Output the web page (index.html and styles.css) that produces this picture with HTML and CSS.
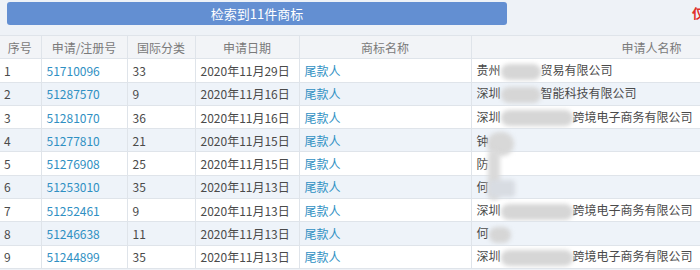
FILE: index.html
```html
<!DOCTYPE html>
<html lang="zh-CN">
<head>
<meta charset="utf-8">
<title>商标查询结果</title>
<link rel="stylesheet" href="styles.css">
</head>
<body>
<div class="page">
  <div class="topbar">
    <div class="result-btn">检索到11件商标</div>
    <div class="note">仅</div>
  </div>
  <div class="table-wrap">
    <table class="grid">
      <colgroup>
        <col class="c-no"><col class="c-reg"><col class="c-cls"><col class="c-date"><col class="c-name"><col class="c-app">
      </colgroup>
      <thead>
        <tr><th>序号</th><th>申请/注册号</th><th>国际分类</th><th>申请日期</th><th>商标名称</th><th>申请人名称</th></tr>
      </thead>
      <tbody>
        <tr><td>1</td><td class="link">51710096</td><td>33</td><td>2020年11月29日</td><td class="link">尾款人</td><td>贵州<span class="blur w40"></span>贸易有限公司</td></tr>
        <tr class="alt"><td>2</td><td class="link">51287570</td><td>9</td><td>2020年11月16日</td><td class="link">尾款人</td><td>深圳<span class="blur w40"></span>智能科技有限公司</td></tr>
        <tr><td>3</td><td class="link">51281070</td><td>36</td><td>2020年11月16日</td><td class="link">尾款人</td><td>深圳<span class="blur w72"></span>跨境电子商务有限公司</td></tr>
        <tr class="alt"><td>4</td><td class="link">51277810</td><td>21</td><td>2020年11月15日</td><td class="link">尾款人</td><td>钟</td></tr>
        <tr><td>5</td><td class="link">51276908</td><td>25</td><td>2020年11月15日</td><td class="link">尾款人</td><td>防</td></tr>
        <tr class="alt"><td>6</td><td class="link">51253010</td><td>35</td><td>2020年11月13日</td><td class="link">尾款人</td><td>何</td></tr>
        <tr><td>7</td><td class="link">51252461</td><td>9</td><td>2020年11月13日</td><td class="link">尾款人</td><td>深圳<span class="blur w72"></span>跨境电子商务有限公司</td></tr>
        <tr class="alt"><td>8</td><td class="link">51246638</td><td>11</td><td>2020年11月13日</td><td class="link">尾款人</td><td>何<span class="blur w22"></span></td></tr>
        <tr><td>9</td><td class="link">51244899</td><td>35</td><td>2020年11月13日</td><td class="link">尾款人</td><td>深圳<span class="blur w72"></span>跨境电子商务有限公司</td></tr>
      </tbody>
    </table>
    <div class="smear-top"></div>
    <div class="smear-trunk"></div>
    <div class="smear-foot"></div>
  </div>
</div>
</body>
</html>
```
FILE: styles.css
```css
html, body {
  margin: 0;
  padding: 0;
  background: #eef2f7;
  overflow: hidden;
}
.page {
  width: 700px;
  height: 270px;
  overflow: hidden;
  font-family: "Noto Sans CJK SC", "Noto Sans", sans-serif;
  font-size: 12px;
  color: #444;
}
.topbar {
  display: flex;
  align-items: flex-start;
  height: 35px;
  padding: 2px 0 0 7px;
  box-sizing: border-box;
}
.result-btn {
  width: 500px;
  height: 23px;
  line-height: 23px;
  background: #638fd2;
  border-radius: 3px;
  color: #fff;
  font-size: 13px;
  text-align: center;
}
.note {
  margin-left: auto;
  margin-top: 3px;
  margin-right: -5px;
  color: #e0302a;
  font-weight: bold;
  font-size: 13px;
  line-height: 16px;
}
.table-wrap {
  position: relative;
  width: 832px;
}
.grid {
  width: 832px;
  border-collapse: collapse;
  table-layout: fixed;
  background: #fff;
}
.c-no { width: 41px; }
.c-reg { width: 86px; }
.c-cls { width: 68px; }
.c-date { width: 104px; }
.c-name { width: 172px; }
.c-app { width: 361px; }
.grid th, .grid td {
  height: 23.3px;
  padding: 0 5px;
  border: 1px solid #dfe4ea;
  white-space: nowrap;
  overflow: hidden;
  box-sizing: border-box;
}
.grid th:first-child, .grid td:first-child {
  border-left: none;
  padding-left: 4px;
}
.grid th {
  background: #f2f4f7;
  color: #7a7a7a;
  font-weight: normal;
  text-align: center;
}
.grid td {
  text-align: left;
  color: #4a4a4a;
}
.grid tr.alt td {
  background: #eef3f9;
}
.grid td.link {
  color: #2f90c3;
}
.blur {
  display: inline-block;
  height: 16px;
  vertical-align: middle;
  background: #d6d6d6;
  border-radius: 8px;
  filter: blur(2px);
}
.w40 { width: 40px; }
.w72 { width: 72px; }
.w22 { width: 22px; }
.smear-top {
  position: absolute;
  left: 487px;
  top: 97px;
  width: 27px;
  height: 24px;
  background: #d8d8d8;
  border-radius: 12px;
  filter: blur(2px);
}
.smear-trunk {
  position: absolute;
  left: 488px;
  top: 115px;
  width: 12px;
  height: 50px;
  background: #dadada;
  border-radius: 6px;
  filter: blur(2px);
}
.smear-foot {
  position: absolute;
  left: 489px;
  top: 145px;
  width: 26px;
  height: 17px;
  background: #d8dce2;
  border-radius: 4px;
  filter: blur(2px);
}
```
